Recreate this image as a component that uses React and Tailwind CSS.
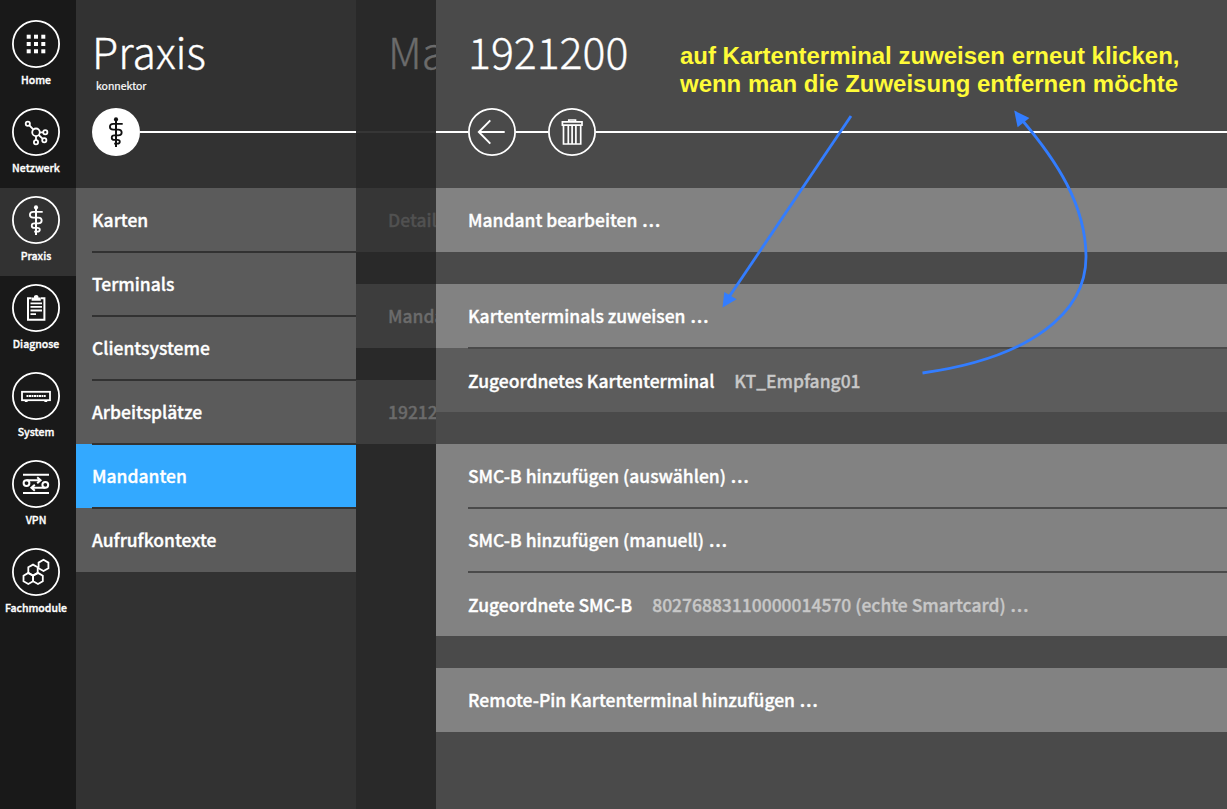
import React from "react";

const glyphs = {
  home: (
    <g fill="currentColor" stroke="none">
      {[14.7, 22, 29.3].map((y) =>
        [14.7, 22, 29.3].map((x) => <rect key={x + "-" + y} x={x} y={y} width="4" height="4" />)
      )}
    </g>
  ),
  network: (
    <g strokeWidth="1.8">
      <circle cx="24" cy="24.3" r="3.8" />
      <circle cx="15.8" cy="15.8" r="2.1" />
      <circle cx="33.3" cy="24.2" r="2.1" />
      <circle cx="32.3" cy="32.3" r="2.1" />
      <circle cx="24" cy="34.3" r="2.1" />
      <path d="M17.4 17.4L21.2 21.4M27.8 24.3H31.2M26.7 27L30.8 30.8M24 28.1V32.2" />
    </g>
  ),
  staff: (
    <g strokeWidth="1.8">
      <circle cx="24" cy="11.4" r="2.1" fill="currentColor" stroke="none" />
      <path d="M24 11V39" strokeWidth="2" />
      <path d="M30.7 15.8H21.2C16.8 15.8 16.8 21.6 21.2 21.6H26.3C30.8 21.6 30.8 27.4 26.3 27.4H22.3C18.9 27.4 18.9 31.9 22.3 31.9H25.4C28.6 31.9 28.6 35.7 25.4 35.7H22.2" />
    </g>
  ),
  clipboard: (
    <g>
      <path d="M19.5 14.2H16V35.8H32.4V14.2H29" strokeWidth="2" />
      <path d="M19.6 16.8V13.4H22V12.6Q22 11 24.2 11T26.4 12.6V13.4H28.8V16.8Z" fill="currentColor" stroke="none" />
      <path d="M18.5 19.3H30M18.5 22.9H30M18.5 26.5H30M18.5 30.2H24" strokeWidth="1.8" />
    </g>
  ),
  system: (
    <g>
      <rect x="10" y="19.8" width="28" height="8.4" strokeWidth="1.8" />
      <path d="M14.5 24H33.7" strokeWidth="2" strokeDasharray="2 .5" />
      <path d="M12.8 29.3H15.6M32.4 29.3H35.2" strokeWidth="1.4" />
    </g>
  ),
  vpn: (
    <g strokeWidth="2">
      <path d="M11 14.8H37M11 33.1H37" />
      <circle cx="14.5" cy="23.1" r="2.9" />
      <circle cx="33.3" cy="24.8" r="2.9" />
      <path d="M14.5 20.2H28M25.2 17.2L28.6 20.2L25.2 23.2M33.3 27.7H20M22.8 24.7L19.4 27.7L22.8 30.7" />
    </g>
  ),
  modules: (
    <g strokeWidth="1.8">
      <path d="M31.5 11.8L36.4 14.6V20.2L31.5 23L26.6 20.2V14.6Z" />
      <path d="M21 16.6L25.7 19.3V24.9L21 27.5L16.3 24.9V19.3Z" />
      <path d="M16.3 24.9L21.1 27.7V33.3L16.3 36L11.5 33.3V27.7Z" />
      <path d="M26 24.9L30.8 27.7V33.3L26 36L21.1 33.3V27.7Z" />
    </g>
  ),
  back: <path d="M36.7 24H10.8M22.3 12.4L10.8 24L22.3 35.6" strokeWidth="1.9" />,
  trash: (
    <g strokeWidth="1.7">
      <path d="M14.4 13.8H34V17.2H14.4ZM20.8 13.8V12H27.5V13.8" />
      <path d="M15.5 17.2V36H32.7V17.2M20.3 17.5V36M24.1 17.5V36M27.9 17.5V36" />
    </g>
  ),
};

function RoundIcon({ name, filled }) {
  return (
    <svg
      viewBox="0 0 48 48"
      fill="none"
      stroke="currentColor"
      className={"block size-12 shrink-0 " + (filled ? "text-[#111111]" : "text-white")}
    >
      {filled ? (
        <circle cx="24" cy="24" r="24" fill="#fff" stroke="none" />
      ) : (
        <circle cx="24" cy="24" r="23.1" strokeWidth="1.8" />
      )}
      {glyphs[name]}
    </svg>
  );
}

const nav = [
  ["home", "Home"],
  ["network", "Netzwerk"],
  ["staff", "Praxis"],
  ["clipboard", "Diagnose"],
  ["system", "System"],
  ["vpn", "VPN"],
  ["modules", "Fachmodule"],
];

function Title({ children, className = "" }) {
  return (
    <h1
      className={
        "h-[54px] whitespace-nowrap text-[42.8px] leading-[54px] font-light [-webkit-text-stroke:0.35px_currentColor] " +
        className
      }
    >
      {children}
    </h1>
  );
}

function Dots() {
  return <span className="-ml-[3px] font-['Open_Sans'] text-[24.5px] leading-[0] tracking-[1px]"> …</span>;
}

function Row({ label, value, dots, divided, inset = "left-8", line = "bg-[#4a4a4a]", className }) {
  return (
    <li
      className={
        "relative flex h-16 items-center whitespace-nowrap text-[17.48px] leading-6 font-medium [-webkit-text-stroke:0.35px_currentColor] " +
        className
      }
    >
      {divided && <span className={"absolute -top-px right-0 h-0.5 " + inset + " " + line} />}
      <span className="h-6">
        {label}
        {dots && !value && <Dots />}
      </span>
      {value && (
        <span className="ml-5 h-6 text-[#c8c8c8]">
          {value}
          {dots && <Dots />}
        </span>
      )}
    </li>
  );
}

const action = "bg-[#828282] pl-8";

export default function App() {
  return (
    <div className="relative flex h-[809px] w-[1227px] overflow-hidden bg-[#4a4a4a] font-['Noto_Sans_CJK_SC','Noto_Sans',sans-serif] text-white">
      <nav className="w-[76px] shrink-0 bg-[#191919] pt-3">
        {nav.map(([icon, label]) => (
          <a
            key={label}
            className={"flex h-[88px] flex-col items-center pt-2 pr-1 " + (label === "Praxis" ? "bg-[#323232]" : "")}
          >
            <RoundIcon name={icon} />
            <span className="mt-1 text-[10.5px] leading-4 font-medium [-webkit-text-stroke:0.35px_currentColor]">
              {label}
            </span>
          </a>
        ))}
      </nav>

      <section className="w-[280px] shrink-0 bg-[#323232]">
        <header className="h-[188px] pt-[23px] pl-4">
          <Title>Praxis</Title>
          <p className="h-[31px] pl-1 text-[10.5px] leading-[18px] [-webkit-text-stroke:0.2px_currentColor]">konnektor</p>
          <div className="flex items-center">
            <RoundIcon name="staff" filled />
            <span className="h-0.5 flex-1 bg-white" />
          </div>
        </header>
        <ul>
          {["Karten", "Terminals", "Clientsysteme", "Arbeitsplätze", "Mandanten", "Aufrufkontexte"].map((t, i) => (
            <Row
              key={t}
              label={t}
              divided={i > 0}
              inset="left-4"
              line="bg-[#323232]"
              className={"pl-4 " + (t === "Mandanten" ? "bg-[#33a9ff]" : "bg-[#5b5b5b]")}
            />
          ))}
        </ul>
      </section>

      <section className="w-20 shrink-0 overflow-hidden bg-[#292929] text-[#6b6b6b]">
        <header className="flex h-[188px] flex-col pt-[23px]">
          <Title className="pl-8">Mandant</Title>
          <span className="mt-[54px] h-0.5 bg-[#363636]" />
        </header>
        <ul className="flex flex-col gap-8">
          <Row label="Details" className="bg-[#363636] pl-8 text-[#515151]" />
          <Row label="Mandant" className="bg-[#3d3d3d] pl-8" />
          <Row label="1921200" className="bg-[#3d3d3d] pl-8" />
        </ul>
      </section>

      <main className="min-w-0 flex-1 bg-[#4a4a4a]">
        <header className="h-[188px] pt-[23px]">
          <Title className="pl-8">1921200</Title>
          <div className="mt-[31px] flex items-center">
            <span className="h-0.5 w-8 bg-white" />
            <RoundIcon name="back" />
            <span className="h-0.5 w-8 bg-white" />
            <RoundIcon name="trash" />
            <span className="h-0.5 flex-1 bg-white" />
          </div>
        </header>
        <div className="flex flex-col gap-8">
          <ul>
            <Row label="Mandant bearbeiten" dots className={action} />
          </ul>
          <ul>
            <Row label="Kartenterminals zuweisen" dots className={action} />
            <Row label="Zugeordnetes Kartenterminal" value="KT_Empfang01" divided className="bg-[#5c5c5c] pt-0.5 pl-8" />
          </ul>
          <ul>
            <Row label="SMC-B hinzufügen (auswählen)" dots className={action} />
            <Row label="SMC-B hinzufügen (manuell)" dots divided className={action} />
            <Row label="Zugeordnete SMC-B" value="80276883110000014570 (echte Smartcard)" dots divided className={action + " pt-0.5"} />
          </ul>
          <ul>
            <Row label="Remote-Pin Kartenterminal hinzufügen" dots className={action} />
          </ul>
        </div>
      </main>

      <p className="absolute top-[42px] left-[680px] font-['Liberation_Sans',sans-serif] text-[23.97px] leading-7 font-bold whitespace-nowrap text-[#fffb38]">
        auf Kartenterminal zuweisen erneut klicken,
        <br />
        wenn man die Zuweisung entfernen möchte
      </p>
      <svg viewBox="0 0 1227 809" className="pointer-events-none absolute inset-0 size-full" fill="none" stroke="#337dff" strokeWidth="2.8">
        <path d="M851 116L729 297" />
        <path d="M722.5 307.5L724.3 292L736.6 299.3Z" fill="#337dff" stroke="none" />
        <path d="M922.5 373C1030 358 1086 313 1086 257C1086 205 1056 160 1022 120" />
        <path d="M1014.2 110.5L1029.4 118L1017.6 127.2Z" fill="#337dff" stroke="none" />
      </svg>
    </div>
  );
}
